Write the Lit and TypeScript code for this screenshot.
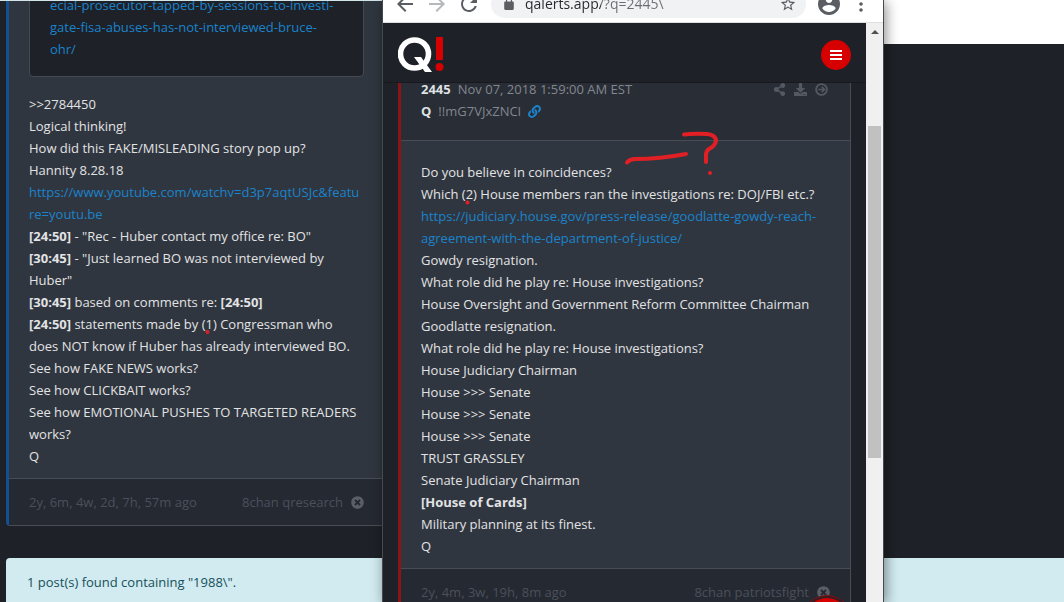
import { LitElement, html, css, svg, nothing } from "lit";
import { customElement, property } from "lit/decorators.js";

const ICONS: Record<string, { box: string; body: unknown }> = {
  close: {
    box: "0 0 512 512",
    body: svg`<path d="M256 8C119 8 8 119 8 256s111 248 248 248 248-111 248-248S393 8 256 8zm121.6 313.1c4.7 4.7 4.7 12.3 0 17L338 377.6c-4.7 4.7-12.3 4.7-17 0L256 312l-65.1 65.6c-4.7 4.7-12.3 4.7-17 0L134.4 338c-4.7-4.7-4.7-12.3 0-17l65.6-65-65.6-65.1c-4.7-4.7-4.7-12.3 0-17l39.6-39.6c4.7-4.7 12.3-4.7 17 0l65 65.7 65.1-65.6c4.7-4.7 12.3-4.7 17 0l39.6 39.6c4.7 4.7 4.7 12.3 0 17L312 256l65.6 65.1z"/>`,
  },
  share: {
    box: "-32 0 512 512",
    body: svg`<path d="M352 320c-22.608 0-43.387 7.819-59.79 20.895l-102.486-64.054a96.551 96.551 0 0 0 0-41.683l102.486-64.054C308.613 184.181 329.392 192 352 192c53.019 0 96-42.981 96-96S405.019 0 352 0s-96 42.981-96 96c0 7.158.79 14.13 2.276 20.841L155.79 180.895C139.387 167.819 118.608 160 96 160c-53.019 0-96 42.981-96 96s42.981 96 96 96c22.608 0 43.387-7.819 59.79-20.895l102.486 64.054A96.301 96.301 0 0 0 256 416c0 53.019 42.981 96 96 96s96-42.981 96-96-42.981-96-96-96z"/>`,
  },
  download: {
    box: "0 0 512 512",
    body: svg`<path d="M216 0h80c13.3 0 24 10.7 24 24v168h87.7c17.8 0 26.7 21.5 14.1 34.1L269.7 378.3c-7.5 7.5-19.8 7.5-27.3 0L90.1 226.1c-12.6-12.6-3.7-34.1 14.1-34.1H192V24c0-13.3 10.7-24 24-24zm296 376v112c0 13.3-10.7 24-24 24H24c-13.3 0-24-10.7-24-24V376c0-13.3 10.7-24 24-24h146.7l49 49c20.1 20.1 52.5 20.1 72.6 0l49-49H488c13.3 0 24 10.7 24 24zm-124 88c0-11-9-20-20-20s-20 9-20 20 9 20 20 20 20-9 20-20zm64 0c0-11-9-20-20-20s-20 9-20 20 9 20 20 20 20-9 20-20z"/>`,
  },
  next: {
    box: "0 0 512 512",
    body: svg`<circle cx="256" cy="256" r="212" fill="none" stroke="currentColor" stroke-width="72"/><path d="M130 256h230M266 150l106 106-106 106" fill="none" stroke="currentColor" stroke-width="62"/>`,
  },
  link: {
    box: "0 0 512 512",
    body: svg`<path d="M326.612 185.391c59.747 59.809 58.927 155.698.36 214.59-.11.12-.24.25-.36.37l-67.2 67.2c-59.27 59.27-155.699 59.262-214.96 0-59.27-59.26-59.27-155.7 0-214.96l37.106-37.106c9.84-9.84 26.786-3.3 27.294 10.606.648 17.722 3.826 35.527 9.69 52.721 1.986 5.822.567 12.262-3.783 16.612l-13.087 13.087c-28.026 28.026-28.905 73.66-1.155 101.96 28.024 28.579 74.086 28.749 102.325.51l67.2-67.19c28.191-28.191 28.073-73.757 0-101.83-3.701-3.694-7.429-6.564-10.341-8.569a16.037 16.037 0 0 1-6.947-12.606c-.396-10.567 3.348-21.456 11.698-29.806l21.054-21.055c5.521-5.521 14.182-6.199 20.584-1.731a152.482 152.482 0 0 1 20.522 17.197zM467.547 44.449c-59.261-59.262-155.69-59.27-214.96 0l-67.2 67.2c-.12.12-.25.25-.36.37-58.566 58.892-59.387 154.781.36 214.59a152.454 152.454 0 0 0 20.521 17.196c6.402 4.468 15.064 3.789 20.584-1.731l21.054-21.055c8.35-8.35 12.094-19.239 11.698-29.806a16.037 16.037 0 0 0-6.947-12.606c-2.912-2.005-6.64-4.875-10.341-8.569-28.073-28.073-28.191-73.639 0-101.83l67.2-67.19c28.239-28.239 74.3-28.069 102.325.51 27.75 28.3 26.872 73.934-1.155 101.96l-13.087 13.087c-4.35 4.35-5.769 10.79-3.783 16.612 5.864 17.194 9.042 34.999 9.69 52.721.509 13.906 17.454 20.446 27.294 10.606l37.106-37.106c59.271-59.259 59.271-155.699.001-214.959z"/>`,
  },
  back: { box: "2 2 20 20", body: svg`<path d="M20 11H7.83l5.59-5.59L12 4l-8 8 8 8 1.41-1.41L7.83 13H20v-2z"/>` },
  forward: { box: "2 2 20 20", body: svg`<path d="M12 4l-1.41 1.41L16.17 11H4v2h12.17l-5.58 5.59L12 20l8-8z"/>` },
  reload: {
    box: "2 2 20 20",
    body: svg`<path d="M17.65 6.35C16.2 4.9 14.21 4 12 4c-4.42 0-7.99 3.58-7.99 8s3.57 8 7.99 8c3.73 0 6.84-2.55 7.73-6h-2.08c-.82 2.33-3.04 4-5.65 4-3.31 0-6-2.69-6-6s2.69-6 6-6c1.66 0 3.14.69 4.22 1.78L13 11h7V4l-2.35 2.35z"/>`,
  },
  lock: {
    box: "2 1 20 22",
    body: svg`<path d="M18 8h-1V6c0-2.76-2.24-5-5-5S7 3.24 7 6v2H6c-1.100 0-2 .9-2 2v10c0 1.100.9 2 2 2h12c1.100 0 2-.9 2-2V10c0-1.100-.9-2-2-2zM8.900 6c0-1.710 1.390-3.100 3.100-3.100s3.100 1.390 3.100 3.100v2H8.900V6z"/>`,
  },
  star: {
    box: "1 1 22 22",
    body: svg`<path d="M22 9.24l-7.190-.62L12 2 9.190 8.630 2 9.240l5.460 4.730L5.820 21 12 17.270 18.180 21l-1.630-7.030L22 9.240zM12 15.400l-3.760 2.270 1-4.280-3.320-2.880 4.380-.38L12 6.100l1.710 4.040 4.380.38-3.320 2.880 1 4.280L12 15.400z"/>`,
  },
  account: {
    box: "2 2 20 20",
    body: svg`<path d="M12 2C6.480 2 2 6.480 2 12s4.480 10 10 10 10-4.480 10-10S17.520 2 12 2zm0 3c1.660 0 3 1.340 3 3s-1.340 3-3 3-3-1.340-3-3 1.340-3 3-3zm0 14.200c-2.500 0-4.710-1.280-6-3.220.03-1.990 4-3.080 6-3.080 1.990 0 5.970 1.090 6 3.080-1.290 1.940-3.500 3.220-6 3.220z"/>`,
  },
  more: {
    box: "2 2 20 20",
    body: svg`<circle cx="12" cy="6" r="1.800"/><circle cx="12" cy="12" r="1.800"/><circle cx="12" cy="18" r="1.800"/>`,
  },
  menu: { box: "0 0 12 12", body: svg`<path d="M0 1h12v2H0zM0 5h12v2H0zM0 9h12v2H0z"/>` },
};

const icon = (name: string) =>
  svg`<svg class="icon ${name}" viewBox=${ICONS[name].box} aria-hidden="true">${ICONS[name].body}</svg>`;

const shared = css`
  * { box-sizing: border-box; }
  a { color: #1b83cb; text-decoration: none; }
  button { border: 0; padding: 0; background: none; color: inherit; font: inherit; display: flex; align-items: center; justify-content: center; }
  .icon { display: block; fill: currentColor; width: 13px; height: 13px; flex: none; }
`;

@customElement("drop-post")
class DropPost extends LitElement {
  @property() age = "";
  @property() board = "";
  @property() number = "";
  @property() date = "";
  @property() trip = "";
  @property({ reflect: true }) tone = "blue";

  static styles = [
    shared,
    css`
      :host { display: block; background: #30363f; border: 1px solid #484d55; border-left: 3px solid #144f92; border-radius: 4px; white-space: nowrap; }
      :host([tone="red"]) { border-left-color: #8b1418; }
      .head { display: flex; justify-content: space-between; background: #292d35; padding: 18px 20px; border-bottom: 1px solid #484d55; color: #828790; }
      .head strong { color: #dfe1e4; }
      .title, .actions { display: flex; align-items: center; height: 22px; }
      .title { gap: 7px; }
      .actions { gap: 8px; color: #545963; padding-right: 2px; }
      .body { padding: 20px 20px 11px; }
      .foot { display: flex; justify-content: space-between; background: #252932; padding: 12px 20px; border-top: 1px solid #484d55; color: #4b505b; }
      .source { display: flex; align-items: center; gap: 8px; }
      .close { color: #5a5e67; }
    `,
  ];

  render() {
    return html`
      ${this.number
        ? html`<header class="head">
            <div>
              <div class="title"><strong>${this.number}</strong><span>${this.date}</span></div>
              <div class="title"><strong>Q</strong><span>${this.trip}</span><a href="#" aria-label="Permalink">${icon("link")}</a></div>
            </div>
            <div class="actions">
              <button aria-label="Share">${icon("share")}</button>
              <button aria-label="Download">${icon("download")}</button>
              <button aria-label="Next">${icon("next")}</button>
            </div>
          </header>`
        : nothing}
      <div class="body"><slot></slot></div>
      <footer class="foot">
        <span>${this.age}</span>
        <span class="source">${this.board}<button aria-label="Close">${icon("close")}</button></span>
      </footer>
    `;
  }
}

@customElement("browser-bar")
class BrowserBar extends LitElement {
  static styles = [
    shared,
    css`
      :host { display: flex; align-items: center; gap: 12px; height: 37px; padding: 0 12px; background: #fff; border-bottom: 1px solid #dcdee0; color: #5a5e63; }
      .icon { width: 20px; height: 20px; }
      .icon.forward { fill: #b6b8bb; }
      .icon.account { width: 22px; height: 22px; }
      .icon.star { width: 16px; height: 16px; }
      .icon.lock { width: 12px; height: 14px; }
      .address { flex: 1; min-width: 0; display: flex; align-items: center; gap: 10px; height: 28px; padding: 0 10px 0 12px; border-radius: 14px; background: #f0f2f4; }
      input { flex: 1; min-width: 0; border: 0; padding: 0; outline: 0; font: 14px/20px "Open Sans", "Noto Sans", sans-serif; color: transparent; background: linear-gradient(90deg, #25282c 76px, #696d72 76px); -webkit-background-clip: text; background-clip: text; }
      .tail { display: flex; gap: 11px; }
    `,
  ];

  render() {
    return html`
      <button aria-label="Back">${icon("back")}</button>
      <button aria-label="Forward">${icon("forward")}</button>
      <button aria-label="Reload">${icon("reload")}</button>
      <div class="address">
        ${icon("lock")}
        <input type="text" aria-label="Address" .value=${"qalerts.app/?q=2445\\"} />
        <button aria-label="Bookmark">${icon("star")}</button>
      </div>
      <div class="tail">
        <button aria-label="Profile">${icon("account")}</button>
        <button aria-label="More">${icon("more")}</button>
      </div>
    `;
  }
}

@customElement("app-root")
class AppRoot extends LitElement {
  static styles = [
    shared,
    css`
      :host { display: block; position: relative; height: 100vh; overflow: hidden; background: #1e2127; color: #e2e3e5; font: 13px/22px "Open Sans", "Noto Sans", sans-serif; }
      .page { display: flex; flex-direction: column; gap: 32px; padding-left: 6px; }
      .top { display: flex; align-items: flex-start; }
      .banner { flex: 1; height: 44px; background: #fff; }
      .left-post { flex: 0 0 379px; margin-top: -43px; }
      .quote { background: #1e2127; border: 1px solid #454a52; border-radius: 4px; padding: 15px 20px 16px; margin-bottom: 16px; }
      .alert { background: #d1ebf0; color: #16505a; border-radius: 4px 0 0 4px; padding: 13px 21px; height: 60px; }
      .edge { position: absolute; inset: 0 auto auto 0; width: 383px; height: 1px; background: #d1e4e8; }

      .window { position: absolute; top: 0; bottom: 0; left: 382px; width: 502px; overflow: hidden; display: flex; flex-direction: column; background: #1e2127; border: 1px solid #454a50; border-width: 0 1px; box-shadow: 2px 2px 12px rgba(0, 0, 0, 0.45); }
      browser-bar { flex: none; margin-top: -14px; }
      .view { flex: 1; min-height: 0; display: flex; }
      .app { flex: 1; min-width: 0; overflow: hidden; display: flex; flex-direction: column; }
      .nav { flex: none; height: 60px; display: flex; align-items: center; justify-content: space-between; padding: 4px 15px 0; background: #1e2127; border-bottom: 1px solid #17191e; }
      .logo { display: block; width: 46px; height: 36px; }
      .menu-button { width: 30px; height: 30px; border-radius: 50%; background: #d60000; color: #fff; }
      .menu-button .icon { width: 12px; height: 12px; }
      .feed { flex: 1; min-height: 0; overflow: hidden; padding: 0 15px; }
      .feed drop-post { margin-top: -24px; }
      .up { position: absolute; right: 34px; bottom: -40px; width: 44px; height: 44px; border-radius: 50%; background: #d60000; box-shadow: 0 0 0 2px #3a1c23, 0 0 0 3px #7a1217; }

      .scroll { flex: none; width: 17px; background: #f0f0f0; padding: 7px 2px 0; display: flex; flex-direction: column; }
      .arrow { align-self: center; border: 4px solid transparent; border-top: 0; border-bottom-color: #505050; }
      .thumb { height: 58%; margin-top: 92px; background: #c1c1c1; flex: none; }
      .ink { position: absolute; left: 0; top: 0; width: 1064px; height: 602px; pointer-events: none; }
    `,
  ];

  render() {
    return html`
      <main class="page">
        <div class="top">
          <drop-post class="left-post" age="2y, 6m, 4w, 2d, 7h, 57m ago" board="8chan qresearch">
            <div class="quote">
              <a href="#">ecial-prosecutor-tapped-by-sessions-to-investi-<br />gate-fisa-abuses-has-not-interviewed-bruce-<br />ohr/</a>
            </div>
            <div>&gt;&gt;2784450</div>
            <div>Logical thinking!</div>
            <div>How did this FAKE/MISLEADING story pop up?</div>
            <div>Hannity 8.28.18</div>
            <a href="#">https://www.youtube.com/watchv=d3p7aqtUSJc&amp;featu<br />re=youtu.be</a>
            <div><b>[24:50]</b> - "Rec - Huber contact my office re: BO"</div>
            <div><b>[30:45]</b> - "Just learned BO was not interviewed by<br />Huber"</div>
            <div><b>[30:45]</b> based on comments re: <b>[24:50]</b></div>
            <div><b>[24:50]</b> statements made by (1) Congressman who<br />does NOT know if Huber has already interviewed BO.</div>
            <div>See how FAKE NEWS works?</div>
            <div>See how CLICKBAIT works?</div>
            <div>See how EMOTIONAL PUSHES TO TARGETED READERS<br />works?</div>
            <div>Q</div>
          </drop-post>
          <div class="banner"></div>
        </div>
        <div class="alert" role="status">1 post(s) found containing "1988\\".</div>
      </main>
      <div class="edge"></div>

      <section class="window" aria-label="Browser window">
        <browser-bar></browser-bar>
        <div class="view">
          <div class="app">
            <nav class="nav">
              <a href="#" aria-label="Home">
                <svg class="logo" viewBox="0 0 46 36">
                  <circle cx="16.500" cy="17" r="14" fill="none" stroke="#fff" stroke-width="5.600" />
                  <path d="M16 20h7l11 15h-7z" fill="#fff" />
                  <path d="M38 0h7v23h-7z" fill="#d60000" />
                  <circle cx="41.500" cy="30" r="4" fill="#d60000" />
                </svg>
              </a>
              <button class="menu-button" aria-label="Menu">${icon("menu")}</button>
            </nav>
            <div class="feed">
              <drop-post tone="red" number="2445" date="Nov 07, 2018 1:59:00 AM EST" trip="!!mG7VJxZNCI" age="2y, 4m, 3w, 19h, 8m ago" board="8chan patriotsfight">
                <div>Do you believe in coincidences?</div>
                <div>Which (2) House members ran the investigations re: DOJ/FBI etc.?</div>
                <a href="#">https://judiciary.house.gov/press-release/goodlatte-gowdy-reach-<br />agreement-with-the-department-of-justice/</a>
                <div>Gowdy resignation.</div>
                <div>What role did he play re: House investigations?</div>
                <div>House Oversight and Government Reform Committee Chairman</div>
                <div>Goodlatte resignation.</div>
                <div>What role did he play re: House investigations?</div>
                <div>House Judiciary Chairman</div>
                <div>House &gt;&gt;&gt; Senate</div>
                <div>House &gt;&gt;&gt; Senate</div>
                <div>House &gt;&gt;&gt; Senate</div>
                <div>TRUST GRASSLEY</div>
                <div>Senate Judiciary Chairman</div>
                <div><b>[House of Cards]</b></div>
                <div>Military planning at its finest.</div>
                <div>Q</div>
              </drop-post>
            </div>
          </div>
          <div class="scroll"><div class="arrow"></div><div class="thumb"></div></div>
        </div>
        <button class="up" aria-label="Back to top"></button>
      </section>

      <svg class="ink" viewBox="0 0 1064 602" fill="none" stroke="#e02024" stroke-width="4" stroke-linecap="round" stroke-linejoin="round" aria-hidden="true">
        <path d="M627 162.500q3-3.500 8-3.500q25 0 51-5" />
        <path d="M684 134.500q8-1 23-.5q9 1 9 7q-1 5-7 8q-3 2-3 6v7" />
        <g fill="#e02024" stroke="none">
          <circle cx="710" cy="173" r="2" />
          <circle cx="207.500" cy="332" r="2" />
          <circle cx="467.500" cy="202.500" r="2" />
        </g>
      </svg>
    `;
  }
}
